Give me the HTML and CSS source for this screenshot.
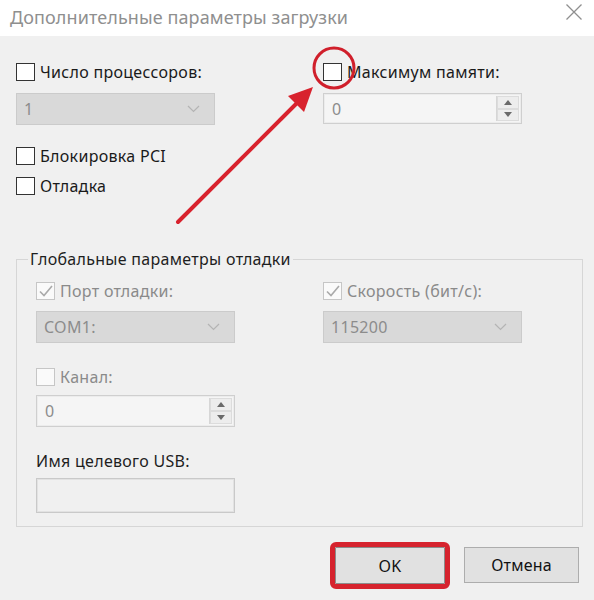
FILE: index.html
```html
<!DOCTYPE html>
<html lang="ru">
<head>
<meta charset="utf-8">
<title>Дополнительные параметры загрузки</title>
<link rel="stylesheet" href="styles.css">
</head>
<body>
<div class="dialog">
  <header class="titlebar">
    <span class="title">Дополнительные параметры загрузки</span>
    <svg class="close" width="18" height="18" viewBox="0 0 18 18"><path d="M1.5 1.5L16.5 16.5M16.5 1.5L1.5 16.5" stroke="#8f8f8f" stroke-width="1.3" fill="none"/></svg>
  </header>
  <main class="content">
    <div class="cols top">
      <div class="col">
        <div class="check"><span class="box"></span><span>Число процессоров:</span></div>
        <div class="select top-field"><span class="val">1</span><svg class="chev" width="13" height="8" viewBox="0 0 13 8"><path d="M1 1L6.5 6.5L12 1" stroke="#b4b4b4" stroke-width="1.2" fill="none"/></svg></div>
      </div>
      <div class="col">
        <div class="check"><span class="box"></span><span>Максимум памяти:</span></div>
        <div class="spin top-field"><span class="val">0</span><div class="spinbtns"><span class="sb"><svg width="8" height="5" viewBox="0 0 8 5"><path d="M0 5L4 0L8 5Z" fill="#6a6a6a"/></svg></span><span class="sb"><svg width="8" height="5" viewBox="0 0 8 5"><path d="M0 0L4 5L8 0Z" fill="#6a6a6a"/></svg></span></div></div>
      </div>
    </div>
    <div class="check pci"><span class="box"></span><span>Блокировка PCI</span></div>
    <div class="check dbg"><span class="box"></span><span>Отладка</span></div>

    <fieldset class="group">
      <legend>Глобальные параметры отладки</legend>
      <div class="cols inner">
        <div class="col">
          <div class="check disabled"><span class="box checked"><svg width="16" height="14" viewBox="0 0 16 14"><path d="M2 7.5L6 11.5L14 2" stroke="#a9a9a9" stroke-width="1.6" fill="none"/></svg></span><span>Порт отладки:</span></div>
          <div class="select g-field"><span class="val">COM1:</span><svg class="chev" width="13" height="8" viewBox="0 0 13 8"><path d="M1 1L6.5 6.5L12 1" stroke="#b4b4b4" stroke-width="1.2" fill="none"/></svg></div>
        </div>
        <div class="col">
          <div class="check disabled"><span class="box checked"><svg width="16" height="14" viewBox="0 0 16 14"><path d="M2 7.5L6 11.5L14 2" stroke="#a9a9a9" stroke-width="1.6" fill="none"/></svg></span><span>Скорость (бит/с):</span></div>
          <div class="select g-field"><span class="val">115200</span><svg class="chev" width="13" height="8" viewBox="0 0 13 8"><path d="M1 1L6.5 6.5L12 1" stroke="#b4b4b4" stroke-width="1.2" fill="none"/></svg></div>
        </div>
      </div>
      <div class="check disabled channel"><span class="box"></span><span>Канал:</span></div>
      <div class="spin ch-field"><span class="val">0</span><div class="spinbtns"><span class="sb"><svg width="8" height="5" viewBox="0 0 8 5"><path d="M0 5L4 0L8 5Z" fill="#6a6a6a"/></svg></span><span class="sb"><svg width="8" height="5" viewBox="0 0 8 5"><path d="M0 0L4 5L8 0Z" fill="#6a6a6a"/></svg></span></div></div>
      <div class="usb-label">Имя целевого USB:</div>
      <div class="textbox"></div>
    </fieldset>

    <div class="buttons">
      <button class="btn ok">OK</button>
      <button class="btn cancel">Отмена</button>
    </div>
  </main>

  <svg class="annot" width="594" height="600" viewBox="0 0 594 600">
    <line x1="178" y1="222" x2="300" y2="100" stroke="#d8222d" stroke-width="4" stroke-linecap="round"/>
    <path d="M313 87L288 96L304 112Z" fill="#d8222d"/>
    <circle cx="334" cy="68" r="20" stroke="#d01f2b" stroke-width="3" fill="none"/>
  </svg>
</div>
</body>
</html>
```
FILE: styles.css
```css
* { box-sizing: border-box; }
html, body { margin: 0; padding: 0; }
body {
  width: 594px;
  height: 600px;
  background: #f0f0f0;
  font-family: "Noto Sans", "Open Sans", sans-serif;
  font-size: 16px;
  letter-spacing: 0.3px;
  color: #1a1a1a;
  overflow: hidden;
}
.dialog { position: relative; width: 594px; height: 600px; }

.titlebar {
  height: 36px;
  background: #fff;
  display: flex;
  justify-content: space-between;
  align-items: flex-start;
  padding: 0 11px 0 10px;
}
.title { font-size: 18px; letter-spacing: 0.1px; line-height: 34px; color: #8f8f8f; }
.close { margin-top: 3px; }

.content { padding: 27px 0 0 16px; }

.cols { display: grid; grid-template-columns: 199px 199px; }
.cols.top { column-gap: 108px; }
.cols.inner { column-gap: 88px; }
.col { display: flex; flex-direction: column; }

.check {
  display: flex;
  align-items: center;
  gap: 5px;
  height: 18px;
  line-height: 18px;
  white-space: nowrap;
}
.box {
  width: 19px;
  height: 18px;
  flex: none;
  border: 1.5px solid #333;
  background: #fff;
  display: flex;
  align-items: center;
  justify-content: center;
}
.check.disabled { color: #8a8a8a; }
.check.disabled .box { border: 1px solid #c6c6c6; background: #fafafa; }
.pci { margin-top: 22px; }
.dbg { margin-top: 12px; }

.select {
  height: 32px;
  width: 199px;
  background: #d9d9d9;
  border: 1px solid #cbcbcb;
  display: flex;
  align-items: center;
  justify-content: space-between;
  padding: 0 14px 0 7px;
  color: #8c8c8c;
}
.top-field { margin-top: 12px; }
.g-field { margin-top: 11px; }

.spin {
  height: 31px;
  width: 199px;
  background: #f5f5f5;
  border: 1px solid #cfcfcf;
  box-shadow: inset 0 0 0 1px #ececec;
  display: flex;
  align-items: center;
  justify-content: space-between;
  padding: 2px 2px 2px 8px;
  color: #8c8c8c;
}
.spinbtns {
  width: 23px;
  height: 100%;
  display: flex;
  flex-direction: column;
  border-left: 1px solid #d6d6d6;
}
.sb {
  flex: 1;
  display: flex;
  align-items: center;
  justify-content: center;
  background: #ededed;
  border: 1px solid #dcdcdc;
}

.group {
  margin: 55px 0 0 0;
  width: 567px;
  border: 1px solid #d6d6d6;
  padding: 14px 19px 13px 19px;
  min-width: 0;
}
.group legend {
  padding: 0 2px;
  margin-left: -8px;
  line-height: 18px;
  color: #1e1e1e;
}
.channel { margin-top: 25px; }
.ch-field { margin-top: 9px; height: 32px; }
.usb-label { margin-top: 25px; line-height: 18px; color: #1e1e1e; }
.textbox {
  margin-top: 8px;
  width: 199px;
  height: 35px;
  background: #f0f0f0;
  border: 1px solid #c9c9c9;
  box-shadow: inset 0 0 0 1px #e2e2e2;
}

.buttons {
  display: flex;
  justify-content: flex-end;
  align-items: flex-start;
  gap: 19px;
  margin: 20px 15px 0 0;
}
.btn {
  font-family: "Noto Sans", "Open Sans", sans-serif;
  font-size: 16px;
  letter-spacing: 0.2px;
  color: #111;
  background: #e1e1e1;
  border: 1px solid #adadad;
  padding: 0;
  height: 36px;
}
.ok {
  width: 110px;
  height: 37px;
  outline: 5px solid #d6232e;
  border-radius: 1px;
  border-color: #8c8c8c;
}
.cancel { width: 115px; }

.annot { position: absolute; left: 0; top: 0; pointer-events: none; }
```
